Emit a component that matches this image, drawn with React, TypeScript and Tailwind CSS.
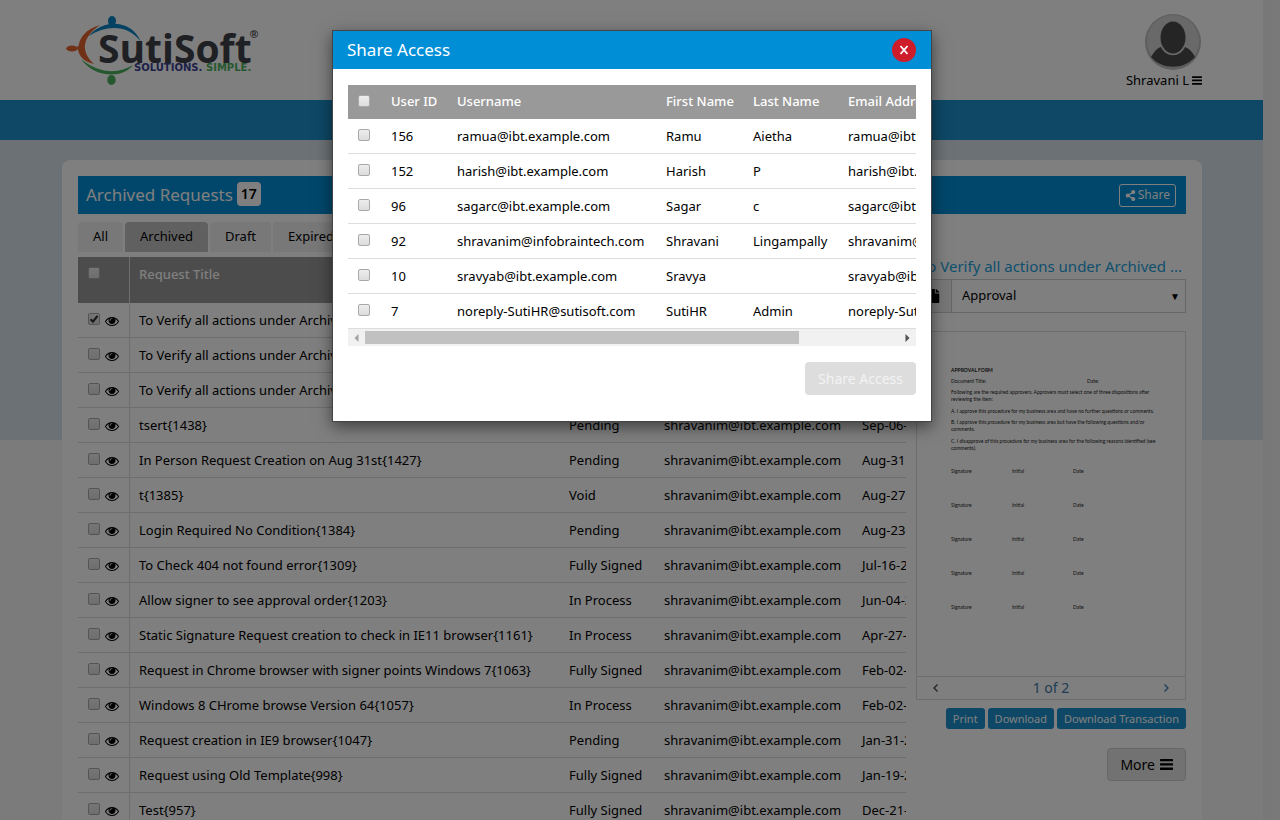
import React from "react";
import { FaFile, FaShareAlt } from "react-icons/fa";

const ARCHIVED = "To Verify all actions under Archived requests{1440}";
const MAIL = "shravanim@ibt.example.com";

const requests = [
  { title: ARCHIVED, status: "Pending", date: "Sep-06-2018", checked: true },
  { title: ARCHIVED, status: "Pending", date: "Sep-06-2018" },
  { title: ARCHIVED, status: "Pending", date: "Sep-06-2018" },
  { title: "tsert{1438}", status: "Pending", date: "Sep-06-2018" },
  { title: "In Person Request Creation on Aug 31st{1427}", status: "Pending", date: "Aug-31-2018" },
  { title: "t{1385}", status: "Void", date: "Aug-27-2018" },
  { title: "Login Required No Condition{1384}", status: "Pending", date: "Aug-23-2018" },
  { title: "To Check 404 not found error{1309}", status: "Fully Signed", date: "Jul-16-2018" },
  { title: "Allow signer to see approval order{1203}", status: "In Process", date: "Jun-04-2018" },
  { title: "Static Signature Request creation to check in IE11 browser{1161}", status: "In Process", date: "Apr-27-2018" },
  { title: "Request in Chrome browser with signer points Windows 7{1063}", status: "Fully Signed", date: "Feb-02-2018" },
  { title: "Windows 8 CHrome browse Version 64{1057}", status: "In Process", date: "Feb-02-2018" },
  { title: "Request creation in IE9 browser{1047}", status: "Pending", date: "Jan-31-2018" },
  { title: "Request using Old Template{998}", status: "Fully Signed", date: "Jan-19-2018" },
  { title: "Test{957}", status: "Fully Signed", date: "Dec-21-2017" },
];

const users = [
  { id: "156", username: "ramua@ibt.example.com", first: "Ramu", last: "Aietha" },
  { id: "152", username: "harish@ibt.example.com", first: "Harish", last: "P" },
  { id: "96", username: "sagarc@ibt.example.com", first: "Sagar", last: "c" },
  { id: "92", username: "shravanim@infobraintech.com", first: "Shravani", last: "Lingampally" },
  { id: "10", username: "sravyab@ibt.example.com", first: "Sravya", last: "" },
  { id: "7", username: "noreply-SutiHR@sutisoft.com", first: "SutiHR", last: "Admin" },
];

function Tick({ label, checked = false }: { label: string; checked?: boolean }) {
  return (
    <span className="relative block size-3">
      <input
        type="checkbox"
        aria-label={label}
        defaultChecked={checked}
        className="peer block size-3 appearance-none rounded-xs border border-[#a9a9a9] bg-linear-to-b from-[#ededed] to-[#dcdcdc]"
      />
      <svg viewBox="0 0 12 12" className="pointer-events-none absolute inset-0 hidden size-3 peer-checked:block">
        <path d="M2.5 6.2 5 8.7 9.5 2.8" fill="none" stroke="#333" strokeWidth="2.2" />
      </svg>
    </span>
  );
}

function EyeIcon() {
  return (
    <svg viewBox="0 0 1792 1792" className="mt-px size-[14px]" fill="currentColor" aria-hidden="true">
      <path d="M1664 960q-152-236-381-353 61 104 61 225 0 185-131.500 316.500t-316.500 131.500-316.500-131.500-131.500-316.500q0-121 61-225-229 117-381 353 133 205 333.500 326.500t434.500 121.500 434.500-121.500 333.500-326.500zm-720-384q0-20-14-34t-34-14q-125 0-214.500 89.500t-89.500 214.500q0 20 14 34t34 14 34-14 14-34q0-86 61-147t147-61q20 0 34-14t14-34zm848 384q0 34-20 69-140 230-376.500 368.500t-499.500 138.500-499.500-139-376.500-368q-20-35-20-69t20-69q140-229 376.500-368t499.500-139 499.500 139 376.500 368q20 35 20 69z" />
    </svg>
  );
}

function BarsIcon({ className }: { className: string }) {
  return (
    <svg viewBox="0 0 13 11" className={className} fill="currentColor" aria-hidden="true">
      <rect width="13" height="2.300" rx="0.500" />
      <rect y="4.300" width="13" height="2.300" rx="0.500" />
      <rect y="8.600" width="13" height="2.300" rx="0.500" />
    </svg>
  );
}

function Logo() {
  return (
    <svg viewBox="0 0 196 72" className="h-[72px] w-[196px]" role="img" aria-label="SutiSoft Solutions. Simple.">
      <path d="M23 22C38 4 66 6 75 28C62 10 40 11 23 22Z" fill="#0a83c6" />
      <ellipse cx="46" cy="7" rx="4" ry="5" fill="#0a83c6" />
      <path d="M43 10L46 13L49 10Z" fill="#0a83c6" />
      <path d="M34 11C20 15 14 23 12.500 32Q10 32 12 35.500C13 42 18 48 28 50C15 38 15 24 34 11Z" fill="#e2622f" />
      <ellipse cx="6" cy="34.500" rx="5.800" ry="3" fill="#e2622f" />
      <path d="M15 45C28 64 57 65 67 51C53 60 33 60 15 45Z" fill="#4bb05c" />
      <ellipse cx="45.500" cy="66" rx="4.200" ry="5" fill="#4bb05c" />
      <text x="32" y="48.500" fontSize="39" fontFamily="Open Sans, sans-serif" fontWeight="700" fill="#3f4048">SutiSoft</text>
      <text x="68" y="57" fontSize="10" fontFamily="DejaVu Sans, sans-serif" fontWeight="700" fill="#3a3f92">SOLUTIONS.</text>
      <text x="140" y="57" fontSize="10" fontFamily="DejaVu Sans, sans-serif" fontWeight="700" fill="#4bb05c">SIMPLE.</text>
      <text x="184" y="24" fontSize="11" fontFamily="Liberation Sans, sans-serif" fontWeight="700" fill="#3f4048">®</text>
    </svg>
  );
}

function Avatar() {
  return (
    <svg viewBox="0 0 56 56" className="mr-px size-14" aria-hidden="true">
      <circle cx="28" cy="28" r="28" fill="#bcbcbc" />
      <circle cx="28" cy="27" r="26" fill="#d2d2d2" />
      <path d="M6 43C9 38 12 34 16 33C21 44 35 44 40 33C45 35 48 39 50 43C39 56 17 56 6 43Z" fill="#4b4b4b" />
      <ellipse cx="28" cy="23.500" rx="12.500" ry="16" fill="#4b4b4b" />
    </svg>
  );
}

function Header() {
  return (
    <header>
      <div className="flex h-[100px] items-start justify-between bg-white pt-[14px] pr-[61px] pl-[66px]">
        <Logo />
        <button type="button" className="flex flex-col items-end text-[13px]">
          <Avatar />
          <span className="flex items-center gap-[3px] leading-5">
            Shravani L <BarsIcon className="h-[9px] w-[10px]" />
          </span>
        </button>
      </div>
      <div className="h-10 bg-[#1c90cc]" />
    </header>
  );
}

function RequestTable() {
  const head = "px-[9px] pt-2 font-medium";
  const cell = "border-b border-[#ddd] px-[9px] pt-[2px] whitespace-nowrap";
  return (
    <div className="w-[828px] overflow-hidden">
      <table className="w-[880px] table-fixed border-separate border-spacing-0 text-left text-[13px]">
        <colgroup>
          <col className="w-[52px]" />
          <col className="w-[430px]" />
          <col className="w-[95px]" />
          <col className="w-[198px]" />
          <col />
        </colgroup>
        <thead>
          <tr className="h-[46px] bg-[#999] align-top text-white">
            <th className="border-r border-[#ddd] pt-[10px] pl-[10px]"><Tick label="Select all requests" /></th>
            <th className={head}>Request Title</th>
            <th className={head}>Status</th>
            <th className={head}>Requested By</th>
            <th className={head}>Date</th>
          </tr>
        </thead>
        <tbody>
          {requests.map((r, i) => (
            <tr key={i} className="h-[35px]">
              <td className="border-r border-b border-[#ddd] pl-[10px]">
                <span className="flex items-start gap-[5px]">
                  <Tick label={`Select ${r.title}`} checked={r.checked} />
                  <EyeIcon />
                </span>
              </td>
              <td className={cell}>{r.title}</td>
              <td className={cell}>{r.status}</td>
              <td className={cell}>{MAIL}</td>
              <td className={cell}>{r.date}</td>
            </tr>
          ))}
        </tbody>
      </table>
    </div>
  );
}

function DocumentPage() {
  return (
    <div className="h-[344px] pt-[35px] pr-6 pl-[34px] font-['Lato',sans-serif] text-[5px] leading-[7px] text-[#222]">
      <p className="font-bold">APPROVAL FORM</p>
      <p className="mt-1 flex"><span className="w-[136px]">Document Title:</span><span>Date:</span></p>
      <p className="mt-1">Following are the required approvers. Approvers must select one of three dispositions after<br />reviewing the item:</p>
      <p className="mt-[5px]">A. I approve this procedure for my business area and have no further questions or comments.</p>
      <p className="mt-1">B. I approve this procedure for my business area but have the following questions and/or<br />comments.</p>
      <p className="mt-[5px]">C. I disapprove of this procedure for my business area for the following reasons identified (see<br />comments).</p>
      <div className="mt-4 flex flex-col gap-[27px]">
        {[1, 2, 3, 4, 5].map((n) => (
          <p key={n} className="flex">
            <span className="w-[61px]">Signature</span>
            <span className="w-[61px]">Initial</span>
            <span>Date</span>
          </p>
        ))}
      </div>
    </div>
  );
}

function Preview() {
  const action = "h-[21px] rounded-[3px] bg-[#1c90cc] px-[7px] text-[11px] leading-5 text-white";
  return (
    <aside className="w-[270px] shrink-0 pt-[38px]">
      <h2 className="truncate pt-px pr-1 text-right text-[15px] leading-[26px] text-[#1c9fdc]">To Verify all actions under Archived ...</h2>
      <div className="flex h-[34px] border border-[#ccc]">
        <span className="grid w-[35px] place-items-center border-r border-[#ccc] bg-[#eee]">
          <FaFile className="size-[14px]" />
        </span>
        <span className="relative flex flex-1">
          <select aria-label="Document" className="w-full appearance-none pl-[10px] text-[13px]">
            <option>Approval</option>
          </select>
          <span className="pointer-events-none absolute top-2 right-[5px] text-[10px] leading-4">▼</span>
        </span>
      </div>
      <div className="mt-[18px] border border-[#ddd]">
        <DocumentPage />
        <div className="flex h-[23px] items-center justify-between border-t border-[#ddd] px-4 text-sm text-[#3d79ab]">
          <button type="button" aria-label="Previous page">
            <svg viewBox="0 0 5 8" className="h-2 w-[5px]"><path d="M4.500 0.500 1 4 4.500 7.500" fill="none" stroke="#444" strokeWidth="1.300" /></svg>
          </button>
          <span>1 of 2</span>
          <button type="button" aria-label="Next page">
            <svg viewBox="0 0 5 8" className="h-2 w-[5px]"><path d="M0.500 0.500 4 4 0.500 7.500" fill="none" stroke="#3d79ab" strokeWidth="1.300" /></svg>
          </button>
        </div>
      </div>
      <div className="mt-2 flex justify-end gap-[3px]">
        <button type="button" className={action}>Print</button>
        <button type="button" className={action}>Download</button>
        <button type="button" className={action}>Download Transaction</button>
      </div>
      <div className="mt-[19px] flex justify-end">
        <button type="button" className="flex h-[33px] items-center gap-[5px] rounded-[4px] border border-[#ccc] bg-[#e4e4e4] px-3 text-sm">
          More <BarsIcon className="h-[11px] w-[13px]" />
        </button>
      </div>
    </aside>
  );
}

function ShareDialog() {
  const head = "px-[9px] font-medium";
  const cell = "border-b border-[#ddd] px-[9px] pt-[2px] whitespace-nowrap";
  return (
    <section role="dialog" aria-label="Share Access" className="mt-[30px] mr-[16px] w-[600px] self-start border border-[#444] bg-white shadow-[0_5px_15px_rgba(0,0,0,0.5)]">
      <header className="flex h-[38px] items-center justify-between bg-[#008ed6] pr-[15px] pl-[14px] text-white">
        <h2 className="text-[17px]">Share Access</h2>
        <button type="button" aria-label="Close" className="grid size-6 place-items-center rounded-full bg-[#cf1c2b]">
          <svg viewBox="0 0 10 10" className="size-[10px]"><path d="M1.500 1 8.500 9M8.500 1 1.500 9" stroke="#fff" strokeWidth="1.800" /></svg>
        </button>
      </header>
      <div className="p-[15px] pt-4 pb-[26px]">
        <div className="overflow-hidden">
          <table className="w-[740px] table-fixed border-separate border-spacing-0 text-left text-[13px]">
            <colgroup>
              <col className="w-[34px]" />
              <col className="w-[66px]" />
              <col className="w-[209px]" />
              <col className="w-[87px]" />
              <col className="w-[95px]" />
              <col />
            </colgroup>
            <thead>
              <tr className="h-[34px] bg-[#999] text-white">
                <th className="pb-[2px] pl-[10px]"><Tick label="Select all users" /></th>
                <th className={head}>User ID</th>
                <th className={head}>Username</th>
                <th className={head}>First Name</th>
                <th className={head}>Last Name</th>
                <th className={head}>Email Address</th>
              </tr>
            </thead>
            <tbody>
              {users.map((u) => (
                <tr key={u.id} className="h-[35px]">
                  <td className="border-b border-[#ddd] pb-[2px] pl-[10px]"><Tick label={`Select ${u.username}`} /></td>
                  <td className={cell}>{u.id}</td>
                  <td className={cell}>{u.username}</td>
                  <td className={cell}>{u.first}</td>
                  <td className={cell}>{u.last}</td>
                  <td className={cell}>{u.username}</td>
                </tr>
              ))}
            </tbody>
          </table>
        </div>
        <div className="flex h-[17px] items-center bg-[#f1f1f1] px-[6px]" aria-hidden="true">
          <svg viewBox="0 0 5 8" className="h-2 w-[5px]"><path d="M4.500 0V8L0.500 4Z" fill="#a3a3a3" /></svg>
          <span className="ml-[6px] h-[13px] w-[434px] bg-[#c1c1c1]" />
          <svg viewBox="0 0 5 8" className="ml-auto h-2 w-[5px]"><path d="M0.500 0V8L4.500 4Z" fill="#505050" /></svg>
        </div>
        <div className="mt-4 flex justify-end">
          <button type="button" className="h-[33px] rounded-[4px] bg-[#ddd] px-[13px] text-sm text-[#f3f3f3]">Share Access</button>
        </div>
      </div>
    </section>
  );
}

const tabs = ["All", "Archived", "Draft", "Expired"];

export default function App() {
  return (
    <div className="relative h-screen overflow-hidden bg-[#f6f6f6] font-['Noto_Sans',sans-serif] text-black">
      <div className="flex h-full">
        <div className="min-w-0 flex-1">
          <Header />
          <div className="h-[300px] bg-[#d7e2e8] pt-5 pr-[61px] pl-[62px]">
            <main className="rounded-lg bg-white p-4">
              <div className="flex h-[38px] items-center justify-between bg-[#008ed6] pr-[10px] pl-2 text-white">
                <h1 className="flex items-center gap-1 text-[17px]">
                  Archived Requests
                  <span className="mb-[2px] rounded-[4px] bg-white px-1 text-sm leading-6 font-semibold text-black">17</span>
                </h1>
                <button type="button" className="flex h-[23px] items-center gap-[2px] rounded-[3px] border border-white px-[5px] text-xs">
                  <FaShareAlt className="size-[11px]" /> Share
                </button>
              </div>
              <div className="flex justify-between">
                <div className="min-w-0">
                  <nav className="flex gap-[2px] pt-2 pb-[5px] text-[13px]">
                    {tabs.map((t) => (
                      <button key={t} type="button" className={t === "Archived" ? "h-[30px] rounded-t-[4px] bg-[#c1c1c1] px-[15px]" : "h-[30px] rounded-t-[4px] bg-[#f1f1f1] px-[15px]"}>
                        {t}
                      </button>
                    ))}
                  </nav>
                  <RequestTable />
                </div>
                <Preview />
              </div>
            </main>
          </div>
        </div>
        <div className="w-[17px] bg-[#f1f1f1]" aria-hidden="true" />
      </div>
      <div className="absolute inset-0 flex justify-center bg-black/50">
        <ShareDialog />
      </div>
    </div>
  );
}
